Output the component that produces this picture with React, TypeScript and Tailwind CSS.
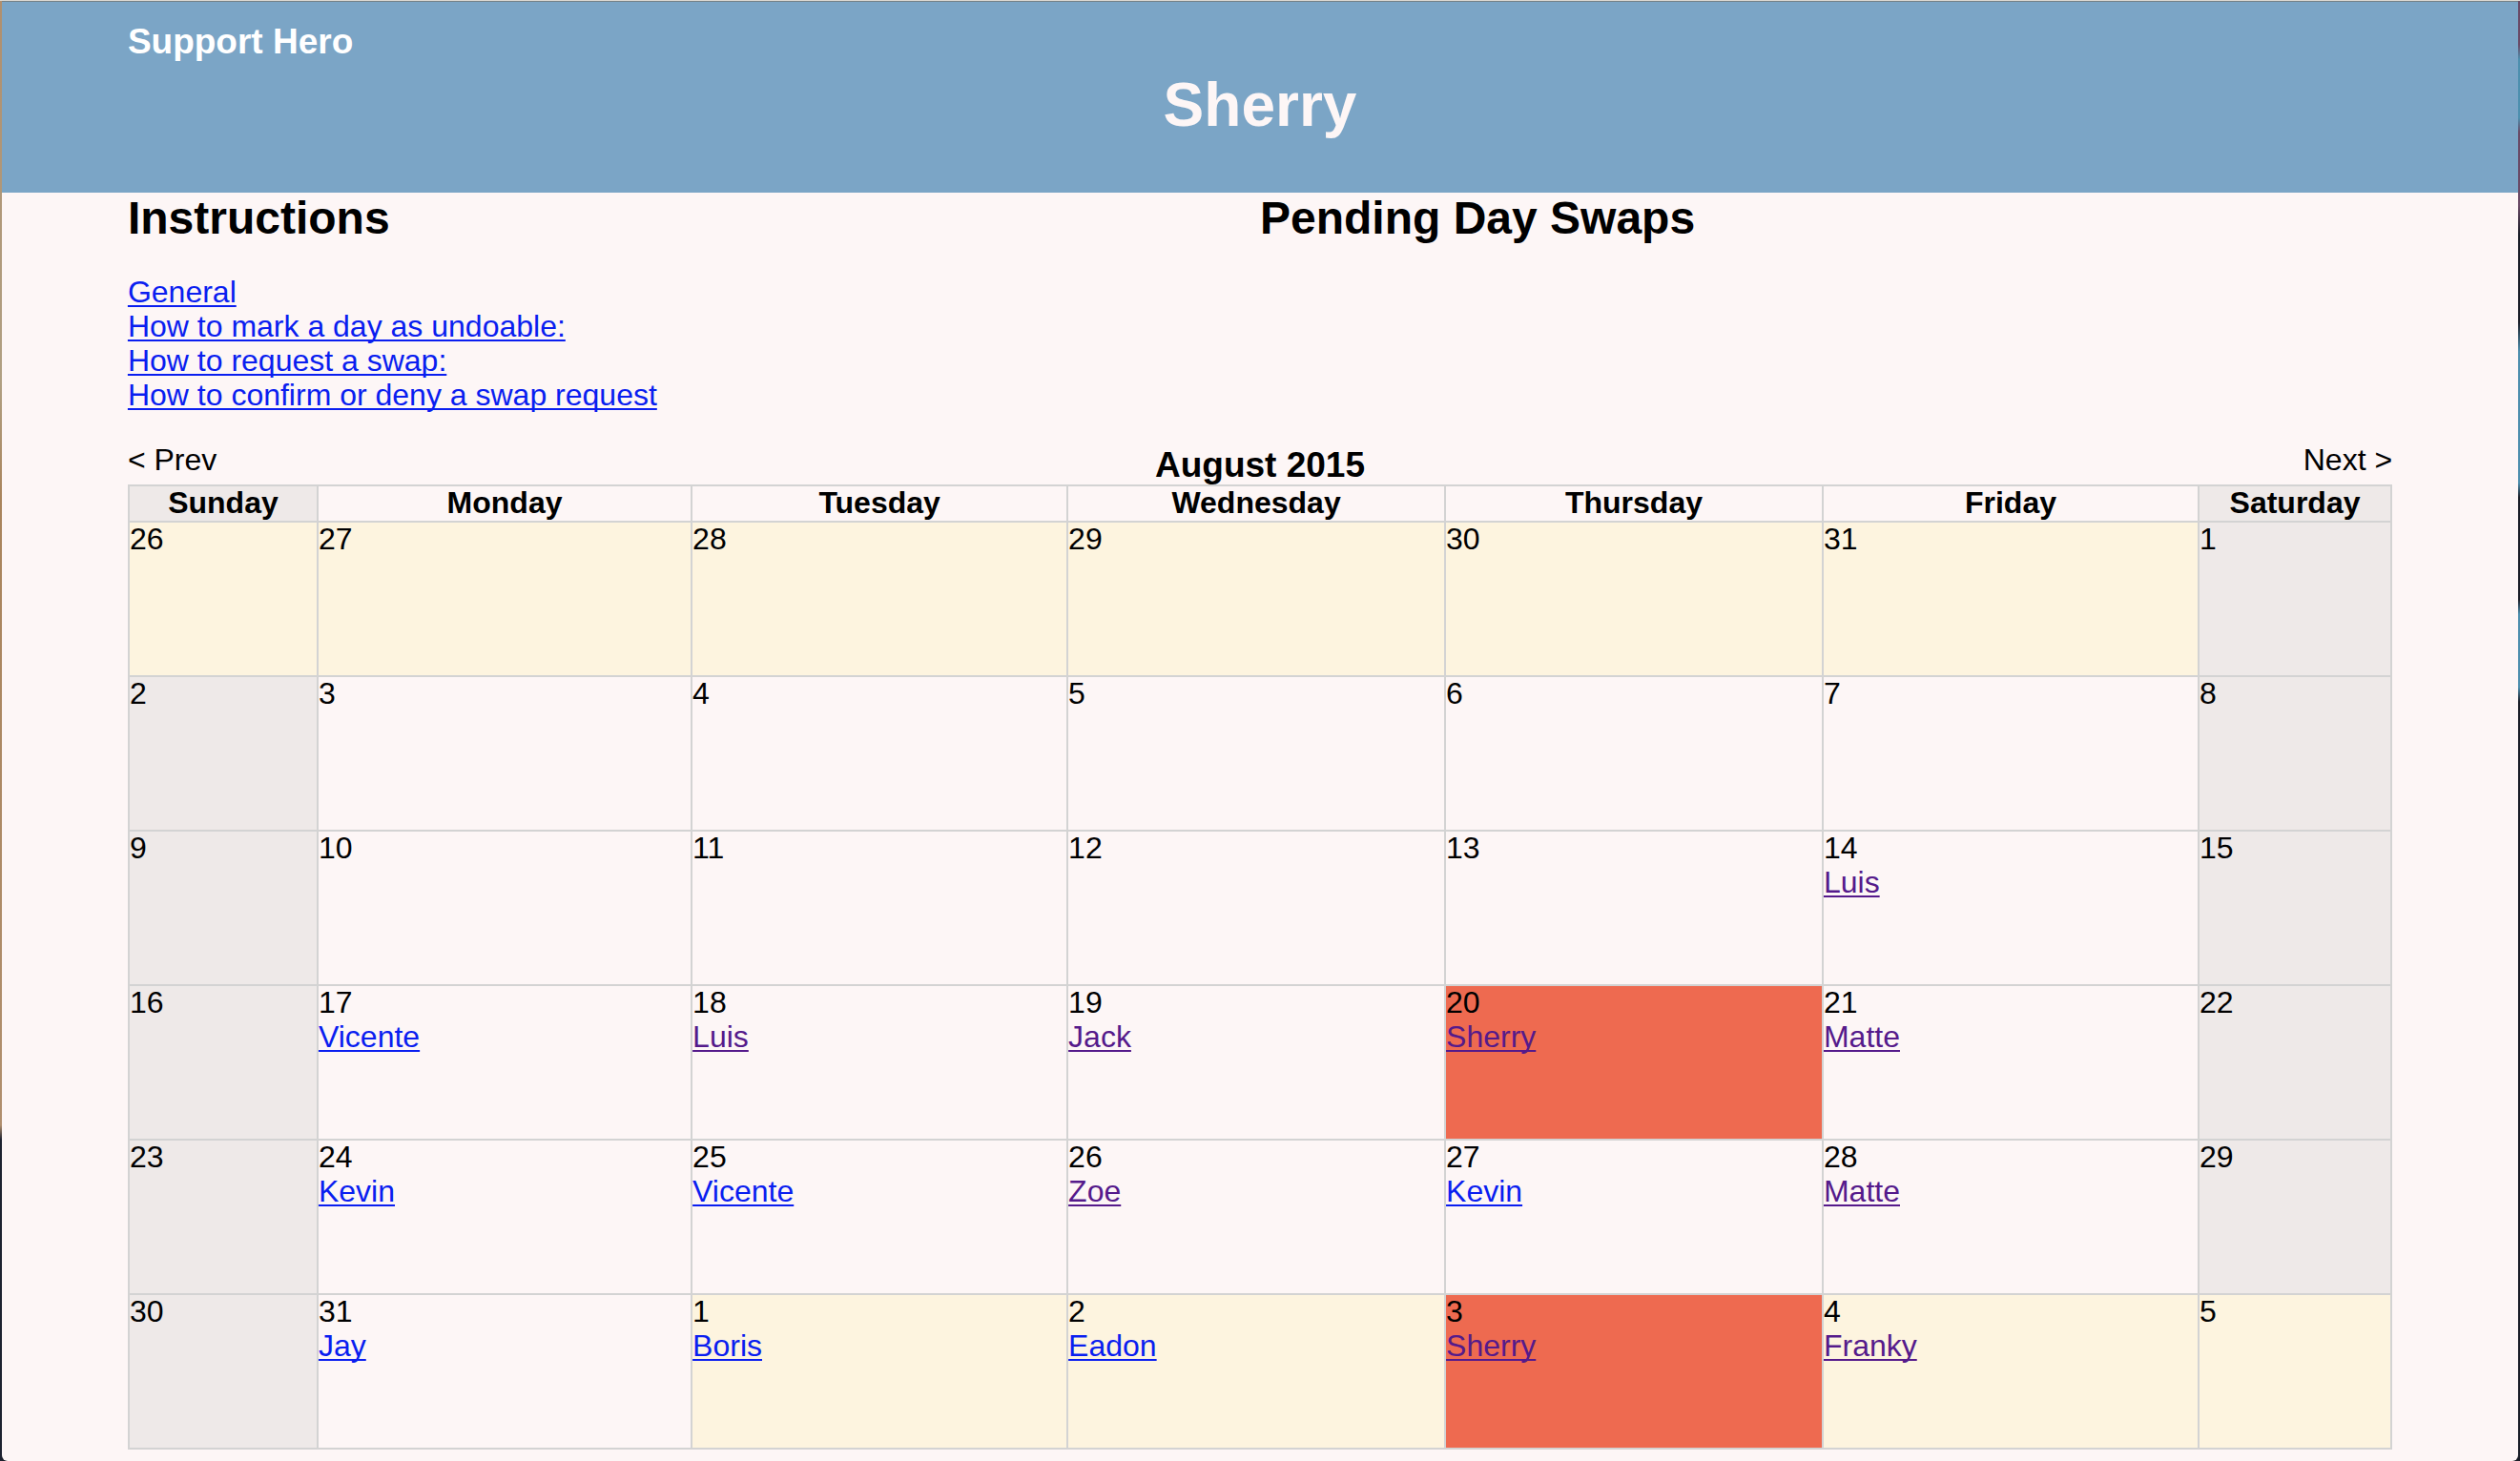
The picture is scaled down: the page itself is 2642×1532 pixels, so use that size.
type Tone = "plain" | "weekend" | "outside" | "mine";

type Day = { date: number; tone: Tone; hero?: string; visited?: boolean };

const d = (date: number, tone: Tone = "plain", hero?: string, visited = false): Day => ({
  date,
  tone,
  hero,
  visited,
});

const weeks: Day[][] = [
  [
    d(26, "outside"),
    d(27, "outside"),
    d(28, "outside"),
    d(29, "outside"),
    d(30, "outside"),
    d(31, "outside"),
    d(1, "weekend"),
  ],
  [d(2, "weekend"), d(3), d(4), d(5), d(6), d(7), d(8, "weekend")],
  [d(9, "weekend"), d(10), d(11), d(12), d(13), d(14, "plain", "Luis", true), d(15, "weekend")],
  [
    d(16, "weekend"),
    d(17, "plain", "Vicente"),
    d(18, "plain", "Luis", true),
    d(19, "plain", "Jack", true),
    d(20, "mine", "Sherry", true),
    d(21, "plain", "Matte", true),
    d(22, "weekend"),
  ],
  [
    d(23, "weekend"),
    d(24, "plain", "Kevin"),
    d(25, "plain", "Vicente"),
    d(26, "plain", "Zoe", true),
    d(27, "plain", "Kevin"),
    d(28, "plain", "Matte", true),
    d(29, "weekend"),
  ],
  [
    d(30, "weekend"),
    d(31, "plain", "Jay"),
    d(1, "outside", "Boris"),
    d(2, "outside", "Eadon"),
    d(3, "mine", "Sherry", true),
    d(4, "outside", "Franky", true),
    d(5, "outside"),
  ],
];

const tones: Record<Tone, string> = {
  plain: "",
  weekend: "bg-[#eee9e8]",
  outside: "bg-[#fdf4df]",
  mine: "bg-[#ee6a50]",
};

const columns = [
  { name: "Sunday", width: "w-[8.35%]" },
  { name: "Monday", width: "w-[16.53%]" },
  { name: "Tuesday", width: "w-[16.61%]" },
  { name: "Wednesday", width: "w-[16.69%]" },
  { name: "Thursday", width: "w-[16.69%]" },
  { name: "Friday", width: "w-[16.61%]" },
  { name: "Saturday", width: "w-[8.52%]" },
];

const instructions = [
  "General",
  "How to mark a day as undoable:",
  "How to request a swap:",
  "How to confirm or deny a swap request",
];

const linkStyle =
  "underline decoration-2 underline-offset-[3px] [text-decoration-skip-ink:none]";

export default function App() {
  return (
    <div className="bg-[#1a1e28]">
      <div className="h-px bg-[#dcd8d2]" />
      <div className="flex">
        <div className="w-[2px] bg-[linear-gradient(#b08f6e,#b0a083_26%,#a9845c_34%,#b08f6e_77%,#1d2230_78%)]" />
        <div className="min-h-[calc(100vh-1px)] flex-1 rounded-b-md border-t border-[#75828a] bg-[#fdf6f6] font-['Liberation_Sans',Arial,sans-serif] text-[32px] leading-[36px] text-black">
          <header className="h-[200px] bg-[#7ba5c6] px-[5%] pt-5">
            <h3 className="text-[37px] leading-[44px] font-bold text-white">Support Hero</h3>
            <h1 className="text-center text-[64px] leading-[88px] font-bold text-[#fdf6f6]">
              Sherry
            </h1>
          </header>

          <main className="px-[5%]">
            <div className="grid grid-cols-2">
              <section>
                <h2 className="text-[48px] leading-[54px] font-bold">Instructions</h2>
                <ul className="mt-8">
                  {instructions.map((text) => (
                    <li key={text}>
                      <a href="#" className={`text-[#0a1ef0] ${linkStyle}`}>
                        {text}
                      </a>
                    </li>
                  ))}
                </ul>
              </section>
              <section>
                <h2 className="text-[48px] leading-[54px] font-bold">Pending Day Swaps</h2>
              </section>
            </div>

            <div className="mt-8 grid h-11 grid-cols-3 items-start">
              <button className="justify-self-start">&lt; Prev</button>
              <h3 className="text-center text-[37px] leading-[48px] font-bold">August 2015</h3>
              <button className="justify-self-end">Next &gt;</button>
            </div>

            <table className="w-full table-fixed border-collapse leading-[34px]">
              <thead>
                <tr>
                  {columns.map(({ name, width }) => (
                    <th
                      key={name}
                      scope="col"
                      className={`h-[38px] border-2 border-[#d3d3d3] p-0 align-top font-bold ${width} ${
                        name.startsWith("S") ? "bg-[#eee9e8]" : ""
                      }`}
                    >
                      {name}
                    </th>
                  ))}
                </tr>
              </thead>
              <tbody>
                {weeks.map((week, i) => (
                  <tr key={i}>
                    {week.map((day) => (
                      <td
                        key={day.date}
                        className={`h-[162px] border-2 border-[#d3d3d3] p-0 align-top ${tones[day.tone]}`}
                      >
                        <div>{day.date}</div>
                        {day.hero && (
                          <div className="leading-[38px]">
                            <a
                              href="#"
                              className={`${day.visited ? "text-[#551a8b]" : "text-[#0a1ef0]"} ${linkStyle}`}
                            >
                              {day.hero}
                            </a>
                          </div>
                        )}
                      </td>
                    ))}
                  </tr>
                ))}
              </tbody>
            </table>
          </main>
        </div>
        <div className="w-[2px] bg-[linear-gradient(#6a4a66_3%,#4d8fae_4%,#4d8fae_8%,#6a4a66_9%,#6a4a66_14%,#1a1e28_16%,#1a1e28_22%,#4d8fae_24%,#4d8fae_33%,#1a1e28_34%,#1a1e28_41%,#4d8fae_42%,#4d8fae_47%,#1a1e28_48%)]" />
      </div>
    </div>
  );
}
